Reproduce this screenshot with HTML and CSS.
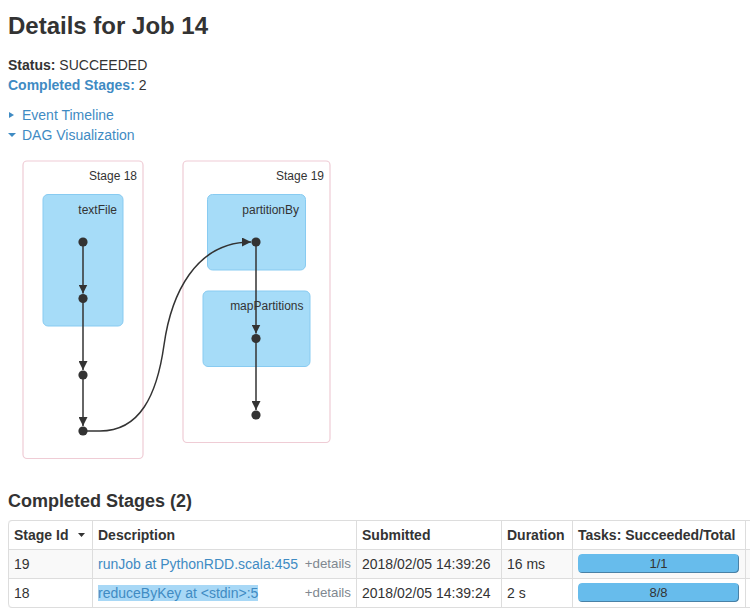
FILE: index.html
```html
<!DOCTYPE html>
<html>
<head>
<meta charset="utf-8">
<link rel="stylesheet" href="styles.css">
</head>
<body>
<div class="page">
  <h3 class="title">Details for Job 14</h3>
  <ul class="summary">
    <li><strong>Status:</strong> SUCCEEDED</li>
    <li><a class="link strong">Completed Stages:</a> 2</li>
  </ul>
  <ul class="toggles">
    <li><span class="arrow-closed"></span><a class="link">Event Timeline</a></li>
    <li><span class="arrow-open"></span><a class="link">DAG Visualization</a></li>
  </ul>
  <svg class="dag" width="340" height="320" viewBox="8 145 340 320">
    <defs>
      <marker id="arr" viewBox="0 0 10 10" refX="10" refY="5" markerWidth="9" markerHeight="9" markerUnits="userSpaceOnUse" orient="auto">
        <path d="M0,0 L10,5 L0,10 Z" fill="#333"/>
      </marker>
    </defs>
    <rect class="stage" x="23" y="161" width="120" height="297.5" rx="4"/>
    <rect class="stage" x="183" y="161" width="147" height="281.5" rx="4"/>
    <text class="lbl" x="137" y="180" text-anchor="end">Stage 18</text>
    <text class="lbl" x="324" y="180" text-anchor="end">Stage 19</text>

    <rect class="rdd" x="43" y="194.5" width="80" height="131.5" rx="5"/>
    <rect class="rdd" x="207.5" y="194.5" width="98" height="75.5" rx="5"/>
    <rect class="rdd" x="203" y="291" width="107" height="75.5" rx="5"/>
    <text class="lbl" x="117" y="213.5" text-anchor="end">textFile</text>
    <text class="lbl" x="299" y="213.5" text-anchor="end">partitionBy</text>
    <text class="lbl" x="303.5" y="310" text-anchor="end">mapPartitions</text>

    <path class="edge" d="M83,242 L83,293.5" marker-end="url(#arr)"/>
    <path class="edge" d="M83,298 L83,370" marker-end="url(#arr)"/>
    <path class="edge" d="M83,375 L83,426" marker-end="url(#arr)"/>
    <path class="edge" d="M256,242 L256,333.5" marker-end="url(#arr)"/>
    <path class="edge" d="M256,338 L256,410" marker-end="url(#arr)"/>
    <path class="edge" d="M83,431 L100,431 C140,431 157,395 164,345 C171,295 195,242 251,242" marker-end="url(#arr)"/>

    <circle class="dot" cx="83" cy="242" r="4.6"/>
    <circle class="dot" cx="83" cy="298.5" r="4.6"/>
    <circle class="dot" cx="83" cy="375" r="4.6"/>
    <circle class="dot" cx="83" cy="431" r="4.6"/>
    <circle class="dot" cx="256" cy="242" r="4.6"/>
    <circle class="dot" cx="256" cy="338.5" r="4.6"/>
    <circle class="dot" cx="256" cy="415" r="4.6"/>
  </svg>

  <h4 class="section">Completed Stages (2)</h4>
  <table class="stages">
    <thead>
      <tr>
        <th class="c-id">Stage Id<svg class="sort" width="7" height="4" viewBox="0 0 7 4"><path d="M0,0 L7,0 L3.5,4 Z" fill="#333"/></svg></th>
        <th class="c-desc">Description</th>
        <th class="c-sub">Submitted</th>
        <th class="c-dur">Duration</th>
        <th class="c-tasks">Tasks: Succeeded/Total</th>
        <th class="c-more"></th>
        <th class="c-more"></th>
      </tr>
    </thead>
    <tbody>
      <tr class="odd">
        <td>19</td>
        <td><span class="details">+details</span><a class="link">runJob at PythonRDD.scala:455</a></td>
        <td>2018/02/05 14:39:26</td>
        <td>16 ms</td>
        <td><div class="progress"><span class="ptext">1/1</span><div class="bar" style="width: 100%"></div></div></td>
        <td></td><td></td>
      </tr>
      <tr>
        <td>18</td>
        <td><span class="details">+details</span><a class="link"><span class="sel">reduceByKey at &lt;stdin&gt;:5</span></a></td>
        <td>2018/02/05 14:39:24</td>
        <td>2 s</td>
        <td><div class="progress"><span class="ptext">8/8</span><div class="bar" style="width: 100%"></div></div></td>
        <td></td><td></td>
      </tr>
    </tbody>
  </table>
</div>
</body>
</html>
```
FILE: styles.css
```css
html, body {
  margin: 0;
  padding: 0;
  overflow: hidden;
  background: #fff;
}
body {
  font-family: "Liberation Sans", Arial, Helvetica, sans-serif;
  font-size: 14px;
  line-height: 20px;
  color: #333;
}
.page {
  padding: 11px 8px 0 8px;
}
.title {
  margin: 0;
  font-size: 24px;
  line-height: 30px;
  font-weight: bold;
  color: #333;
}
.summary, .toggles {
  list-style: none;
  margin: 14px 0 0 0;
  padding: 0;
}
.toggles {
  margin-top: 10px;
}
.toggles li {
  display: flex;
  align-items: center;
}
.link {
  color: #3f8bc3;
  text-decoration: none;
}
.strong {
  font-weight: bold;
}
.arrow-closed {
  width: 0;
  height: 0;
  border-top: 3.5px solid transparent;
  border-bottom: 3.5px solid transparent;
  border-left: 5px solid #3f8bc3;
  margin: 0 8px 0 1px;
}
.arrow-open {
  width: 0;
  height: 0;
  border-left: 4px solid transparent;
  border-right: 4px solid transparent;
  border-top: 4px solid #3f8bc3;
  margin: 0 6px 0 0;
}
.dag {
  display: block;
}
.stage {
  fill: #fff;
  stroke: #efccd5;
  stroke-width: 1.2;
}
.rdd {
  fill: #a6dcf8;
  stroke: #88cbf1;
  stroke-width: 1;
}
.lbl {
  font-family: "Liberation Sans", Arial, sans-serif;
  font-size: 12px;
  fill: #333;
}
.edge {
  fill: none;
  stroke: #333;
  stroke-width: 1.5;
}
.dot {
  fill: #333;
}
.section {
  margin: 26px 0 9px 0;
  font-size: 18px;
  line-height: 20px;
  font-weight: bold;
  color: #333;
}
.stages {
  border-collapse: separate;
  border-spacing: 0;
  table-layout: fixed;
  width: 938px;
  border: 1px solid #ddd;
  border-left: 0;
  border-radius: 4px;
}
.stages th, .stages td {
  padding: 4px 5px;
  line-height: 20px;
  text-align: left;
  vertical-align: top;
  border-left: 1px solid #ddd;
  white-space: nowrap;
  overflow: hidden;
}
.stages th {
  font-weight: bold;
  vertical-align: bottom;
}
.stages td {
  border-top: 1px solid #ddd;
}
.stages thead th:first-child {
  border-top-left-radius: 4px;
}
.stages tbody tr:last-child td:first-child {
  border-bottom-left-radius: 4px;
}
.stages tr.odd td {
  background: #f9f9f9;
}
.c-id { width: 73px; }
.c-desc { width: 253px; }
.c-sub { width: 134px; }
.c-dur { width: 60px; }
.c-tasks { width: 162px; }
.c-more { width: 89px; }
.sort {
  margin-left: 10px;
  vertical-align: middle;
  position: relative;
  top: -1px;
}
.details {
  float: right;
  font-size: 13.33px;
  color: #808890;
}
.sel {
  background: #a8d8f6;
}
.progress {
  position: relative;
  height: 19px;
  width: 161px;
  border-radius: 4px;
  overflow: hidden;
  background: #f2f2f2;
}
.bar {
  height: 19px;
  background: #67bcec;
  border-radius: 4px;
  box-shadow: inset -1px -1px 0 rgba(50, 80, 110, 0.55);
}
.ptext {
  position: absolute;
  left: 0;
  right: 0;
  top: 0;
  text-align: center;
  font-size: 13px;
  line-height: 19px;
  color: #333;
}
```
